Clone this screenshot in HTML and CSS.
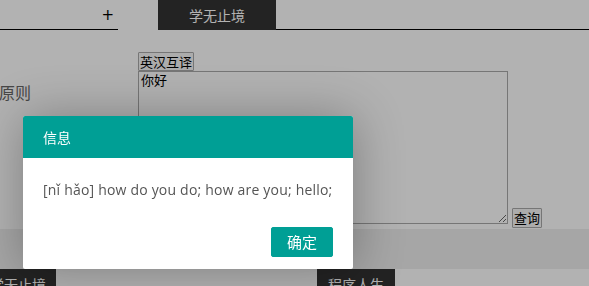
FILE: index.html
```html
<!DOCTYPE html>
<html lang="zh-CN">
<head>
    <meta charset="UTF-8">
    <meta name="viewport" content="width=device-width, initial-scale=1.0">
    <title>英汉互译</title>
    <link rel="stylesheet" href="styles.css">
</head>
<body>
    <div class="topbar">
        <div class="topbar-left"><span class="add">+</span></div>
        <div class="tab">学无止境</div>
        <div class="topbar-rest"></div>
    </div>

    <div class="main">
        <div class="side"><span>设计原则</span></div>
        <div class="translator">
            <button class="mode-btn">英汉互译</button>
            <div class="query-row">
                <textarea class="word-input">你好</textarea>
                <button class="query-btn">查询</button>
            </div>
        </div>
    </div>

    <div class="band"></div>

    <div class="cards">
        <div class="card-tab first">学无止境</div>
        <div class="card-tab">程序人生</div>
    </div>

    <!-- layer dialog -->
    <div class="shade"></div>
    <div class="layer">
        <div class="layer-title">信息</div>
        <div class="layer-content">[nǐ hǎo] how do you do; how are you; hello;</div>
        <div class="layer-btns">
            <a class="layer-btn">确定</a>
        </div>
    </div>
</body>
</html>
```

FILE: styles.css
```css
body {
    margin: 0;
    background-color: #fff;
    font-family: "Noto Sans", "Noto Sans CJK SC", sans-serif;
    color: #333;
    overflow: hidden;
}
.topbar {
    display: flex;
    height: 30px;
}
.topbar-left {
    width: 118px;
    border-bottom: 1px solid #000;
    display: flex;
    justify-content: flex-end;
    align-items: center;
    padding-right: 4px;
    box-sizing: border-box;
}
.add {
    font-family: "DejaVu Sans", sans-serif;
    font-size: 15px;
    color: #000;
}
.tab {
    width: 118px;
    margin-left: 40px;
    background-color: #333;
    color: #fff;
    font-size: 14px;
    line-height: 30px;
    text-align: center;
    font-family: "Noto Sans CJK SC", sans-serif;
}
.topbar-rest {
    flex: 1;
    border-bottom: 1px solid #000;
}
.main {
    display: flex;
}
.side {
    width: 31px;
    overflow: hidden;
    display: flex;
    justify-content: flex-end;
    padding-top: 50px;
    font-size: 16px;
    color: #666;
    white-space: nowrap;
    font-family: "Noto Sans CJK SC", sans-serif;
}
.translator {
    margin-left: 107px;
    padding-top: 22px;
}
.mode-btn,
.query-btn {
    display: block;
    font-family: "Noto Sans CJK SC", sans-serif;
    font-size: 13px;
    padding: 0 1px;
    border: 1px solid #aaa;
    background-color: #f7f7f7;
    color: #000;
    border-radius: 1px;
}
.mode-btn {
    line-height: 17px;
}
.query-row {
    display: flex;
}
.word-input {
    width: 370px;
    height: 153px;
    box-sizing: border-box;
    border: 1px solid #aaa;
    padding: 0 2px;
    margin: 0 0 5px 0;
    font-family: "Noto Sans CJK SC", sans-serif;
    font-size: 13px;
    line-height: 15px;
    color: #000;
    background: #fff;
}
.query-btn {
    align-self: flex-end;
    margin: 0 0 1px 4px;
    line-height: 18px;
}
.band {
    height: 40px;
    background-color: #eee;
}
.cards {
    display: flex;
    gap: 261px;
}
.card-tab {
    background-color: #333;
    color: #fff;
    font-size: 14px;
    line-height: 30px;
    padding: 0 11px;
    font-family: "Noto Sans CJK SC", sans-serif;
}
.card-tab.first {
    margin-left: -20px;
    padding: 0 10px;
}
.shade {
    position: fixed;
    inset: 0;
    background-color: #000;
    opacity: 0.3;
}
.layer {
    position: fixed;
    left: 23px;
    top: 116px;
    width: 330px;
    background-color: #fff;
    border-radius: 2px;
    box-shadow: 1px 1px 50px rgba(0,0,0,0.3);
    font-family: "Open Sans", "Noto Sans CJK SC", sans-serif;
}
.layer-title {
    height: 42px;
    line-height: 42px;
    padding: 0 20px;
    background-color: #009f95;
    color: #fff;
    font-size: 14px;
    border-radius: 2px 2px 0 0;
    font-family: "Noto Sans CJK SC", sans-serif;
}
.layer-content {
    padding: 20px;
    font-size: 14px;
    line-height: 24px;
    letter-spacing: 0.2px;
    color: #555;
    white-space: nowrap;
}
.layer-btns {
    display: flex;
    justify-content: flex-end;
    padding: 0 15px 12px;
}
.layer-btn {
    height: 28px;
    line-height: 28px;
    margin: 5px 5px 0;
    padding: 0 15px;
    border: 1px solid #009f95;
    background-color: #009f95;
    color: #fff;
    border-radius: 2px;
    font-size: 15px;
    font-family: "Noto Sans CJK SC", sans-serif;
    cursor: pointer;
}
```
